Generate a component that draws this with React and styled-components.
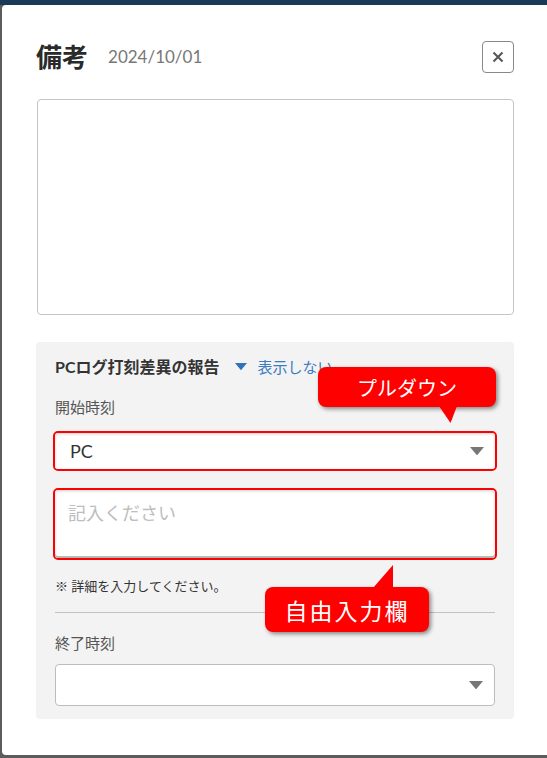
import React from "react";
import styled, { createGlobalStyle } from "styled-components";

const GlobalStyle = createGlobalStyle`
  html, body {
    margin: 0;
    padding: 0;
    overflow: hidden;
  }
  body {
    font-family: "Lato", "Noto Sans CJK JP", sans-serif;
    background: #5c5c5c;
  }
`;

const App = () => (
  <>
    <GlobalStyle />
    <Page>
      <Modal>
        <Header>
          <Title>備考</Title>
          <DateText>2024/10/01</DateText>
          <CloseButton aria-label="close">
            <svg width="12" height="12" viewBox="0 0 12 12">
              <path d="M1.5 1.5 L10.5 10.5 M10.5 1.5 L1.5 10.5" stroke="#555" strokeWidth="2" />
            </svg>
          </CloseButton>
        </Header>

        <MemoArea />

        <Panel>
          <PanelHead>
            <PanelTitle>PCログ打刻差異の報告</PanelTitle>
            <Toggle>
              <TriangleDown color="#2f72bd" width={12} />
              表示しない
            </Toggle>
          </PanelHead>

          <Label>開始時刻</Label>
          <Annotated>
            <Select>
              <span>PC</span>
              <TriangleDown color="#777" width={14} />
            </Select>
            <Callout top={-66} right={-1} width={178} height={40}>
              プルダウン
              <TailDown />
            </Callout>
          </Annotated>

          <Annotated $gap={17}>
            <DetailArea>記入ください</DetailArea>
            <Callout top={97} left={210} width={164} height={45} $spacing={2}>
              自由入力欄
              <TailUp />
            </Callout>
          </Annotated>

          <Note>※ 詳細を入力してください。</Note>
          <Divider />

          <Label>終了時刻</Label>
          <PlainSelect>
            <TriangleDown color="#777" width={14} />
          </PlainSelect>
        </Panel>
      </Modal>
    </Page>
  </>
);

const TriangleDown = ({ color, width }) => (
  <svg width={width} height={width * 0.6} viewBox="0 0 10 6">
    <path d="M0 0 L10 0 L5 6 Z" fill={color} />
  </svg>
);

// Styles
const Page = styled.div`
  height: 758px;
  border-top: 5px solid #1b3a58;
  box-sizing: border-box;
  padding-left: 2px;
`;

const Modal = styled.div`
  width: 548px;
  height: 750px;
  background: #fff;
  border-radius: 4px;
  box-sizing: border-box;
  padding: 36px 36px 0 34px;
`;

const Header = styled.div`
  display: flex;
  align-items: center;
  height: 32px;
  margin-bottom: 26px;
`;

const Title = styled.h1`
  margin: -3px 0 0 0;
  font-size: 26px;
  line-height: 32px;
  font-weight: 700;
  color: #2a2a2a;
  font-family: "Noto Sans CJK JP", sans-serif;
`;

const DateText = styled.span`
  margin-left: 20px;
  font-size: 17px;
  line-height: 24px;
  color: #777;
`;

const CloseButton = styled.button`
  margin-left: auto;
  width: 32px;
  height: 32px;
  border: 1px solid #888;
  border-radius: 4px;
  background: #fff;
  display: flex;
  align-items: center;
  justify-content: center;
  padding: 0;
`;

const MemoArea = styled.div`
  height: 216px;
  border: 1px solid #c4c4c4;
  border-radius: 4px;
  margin-left: 1px;
  box-sizing: border-box;
`;

const Panel = styled.div`
  margin-top: 27px;
  background: #f3f3f3;
  border-radius: 4px;
  padding: 15px 19px 13px;
  display: flex;
  flex-direction: column;
`;

const PanelHead = styled.div`
  display: flex;
  align-items: center;
  height: 20px;
`;

const PanelTitle = styled.span`
  font-size: 16px;
  line-height: 20px;
  font-weight: 700;
  color: #333;
`;

const Toggle = styled.span`
  display: flex;
  align-items: center;
  gap: 11px;
  margin-left: 15px;
  font-size: 15px;
  line-height: 20px;
  color: #3b7bc2;
`;

const Label = styled.div`
  margin-top: 20px;
  font-size: 15px;
  line-height: 20px;
  color: #555;
`;

const Annotated = styled.div`
  position: relative;
  margin: ${(p) => p.$gap ?? 14}px -2px 0;
  border: 2px solid #f00;
  border-radius: 5px;
`;

const Select = styled.div`
  height: 36px;
  background: #fff;
  border-radius: 3px;
  box-shadow: inset 0 1px 3px rgba(0, 0, 0, 0.18);
  display: flex;
  align-items: center;
  justify-content: space-between;
  padding: 0 11px 0 15px;
  font-size: 18px;
  color: #333;
`;

const DetailArea = styled.div`
  height: 68px;
  background: #fff;
  border-radius: 3px;
  box-shadow: inset 0 1px 3px rgba(0, 0, 0, 0.18), inset 0 -2px 0 #bbb;
  box-sizing: border-box;
  padding: 10px 13px;
  font-size: 18px;
  line-height: 26px;
  color: #bdbdbd;
`;

const Note = styled.div`
  margin-top: 17px;
  font-size: 13px;
  line-height: 18px;
  color: #333;
`;

const Divider = styled.hr`
  margin: 17px 0 0;
  border: none;
  border-top: 1px solid #c2c2c2;
`;

const PlainSelect = styled.div`
  margin-top: 11px;
  height: 42px;
  box-sizing: border-box;
  background: #fff;
  border: 1px solid #bdbdbd;
  border-radius: 4px;
  display: flex;
  align-items: center;
  justify-content: flex-end;
  padding-right: 11px;
`;

const Callout = styled.div`
  position: absolute;
  top: ${(p) => p.top}px;
  ${(p) => (p.left !== undefined ? `left: ${p.left}px;` : "")}
  ${(p) => (p.right !== undefined ? `right: ${p.right}px;` : "")}
  width: ${(p) => p.width}px;
  height: ${(p) => p.height}px;
  background: #f00;
  border-radius: 8px;
  box-shadow: 2px 2px 4px rgba(0, 0, 0, 0.45);
  color: #fff;
  font-family: "Noto Sans CJK JP", sans-serif;
  font-size: ${(p) => (p.$spacing ? 23 : 20)}px;
  letter-spacing: ${(p) => p.$spacing ?? 0}px;
  display: flex;
  align-items: center;
  justify-content: center;
  z-index: 2;
`;

const TailDown = styled.span`
  position: absolute;
  top: 39px;
  left: 121px;
  width: 18px;
  height: 17px;
  background: #f00;
  clip-path: polygon(0 0, 100% 0, 64% 100%);
`;

const TailUp = styled.span`
  position: absolute;
  bottom: 44px;
  left: 108px;
  width: 20px;
  height: 23px;
  background: #f00;
  clip-path: polygon(100% 0, 100% 100%, 0 100%);
`;

export default App;
